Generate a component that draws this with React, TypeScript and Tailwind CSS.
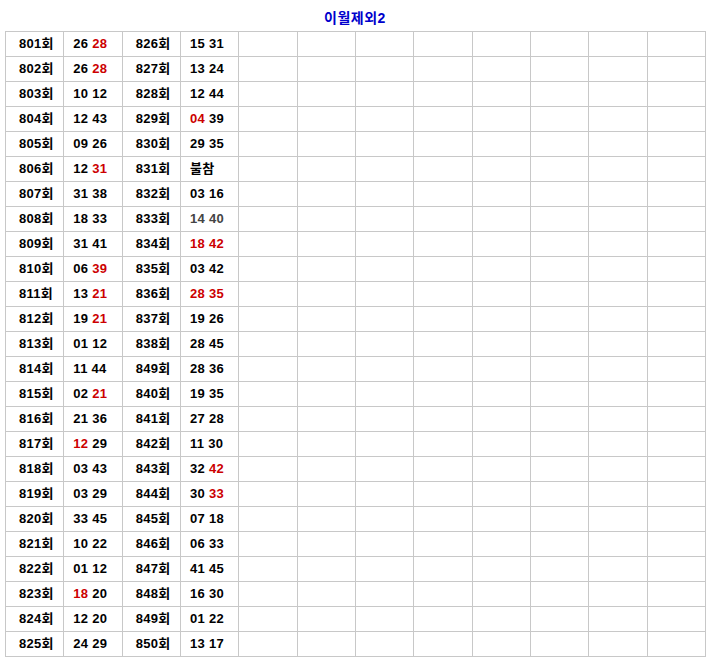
type Num = { v: string; c?: 'r' | 'g' }
type Row = { a: string; an: Num[]; b: string; bn: Num[] | string }

const n = (s: string, c?: 'r' | 'g'): Num => ({ v: s, c })

// 이월제외 목록 (왼쪽 801~825, 오른쪽 826~850)
const rows: Row[] = [
  { a: '801회', an: [n('26'), n('28', 'r')], b: '826회', bn: [n('15'), n('31')] },
  { a: '802회', an: [n('26'), n('28', 'r')], b: '827회', bn: [n('13'), n('24')] },
  { a: '803회', an: [n('10'), n('12')], b: '828회', bn: [n('12'), n('44')] },
  { a: '804회', an: [n('12'), n('43')], b: '829회', bn: [n('04', 'r'), n('39')] },
  { a: '805회', an: [n('09'), n('26')], b: '830회', bn: [n('29'), n('35')] },
  { a: '806회', an: [n('12'), n('31', 'r')], b: '831회', bn: '불참' },
  { a: '807회', an: [n('31'), n('38')], b: '832회', bn: [n('03'), n('16')] },
  { a: '808회', an: [n('18'), n('33')], b: '833회', bn: [n('14', 'g'), n('40', 'g')] },
  { a: '809회', an: [n('31'), n('41')], b: '834회', bn: [n('18', 'r'), n('42', 'r')] },
  { a: '810회', an: [n('06'), n('39', 'r')], b: '835회', bn: [n('03'), n('42')] },
  { a: '811회', an: [n('13'), n('21', 'r')], b: '836회', bn: [n('28', 'r'), n('35', 'r')] },
  { a: '812회', an: [n('19'), n('21', 'r')], b: '837회', bn: [n('19'), n('26')] },
  { a: '813회', an: [n('01'), n('12')], b: '838회', bn: [n('28'), n('45')] },
  { a: '814회', an: [n('11'), n('44')], b: '849회', bn: [n('28'), n('36')] },
  { a: '815회', an: [n('02'), n('21', 'r')], b: '840회', bn: [n('19'), n('35')] },
  { a: '816회', an: [n('21'), n('36')], b: '841회', bn: [n('27'), n('28')] },
  { a: '817회', an: [n('12', 'r'), n('29')], b: '842회', bn: [n('11'), n('30')] },
  { a: '818회', an: [n('03'), n('43')], b: '843회', bn: [n('32'), n('42', 'r')] },
  { a: '819회', an: [n('03'), n('29')], b: '844회', bn: [n('30'), n('33', 'r')] },
  { a: '820회', an: [n('33'), n('45')], b: '845회', bn: [n('07'), n('18')] },
  { a: '821회', an: [n('10'), n('22')], b: '846회', bn: [n('06'), n('33')] },
  { a: '822회', an: [n('01'), n('12')], b: '847회', bn: [n('41'), n('45')] },
  { a: '823회', an: [n('18', 'r'), n('20')], b: '848회', bn: [n('16'), n('30')] },
  { a: '824회', an: [n('12'), n('20')], b: '849회', bn: [n('01'), n('22')] },
  { a: '825회', an: [n('24'), n('29')], b: '850회', bn: [n('13'), n('17')] },
]

const color = (c?: 'r' | 'g') =>
  c === 'r' ? 'text-[#cc0000]' : c === 'g' ? 'text-[#444444]' : 'text-black'

function Nums({ list }: { list: Num[] | string }) {
  if (typeof list === 'string') return <span>{list}</span>
  return (
    <>
      {list.map((x, i) => (
        <span key={i} className={color(x.c)}>
          {i > 0 ? ' ' : ''}
          {x.v}
        </span>
      ))}
    </>
  )
}

const td = 'border border-[#c8c8c8] h-[25px] p-0 align-middle whitespace-pre tracking-[0.3px]'

export default function App() {
  return (
    <div
      className="w-[728px] h-[672px] bg-white text-[13px] font-bold text-black"
      style={{ fontFamily: '"Liberation Sans", "Noto Sans CJK KR", sans-serif' }}
    >
      <div className="w-[710px] pt-[10px]">
        <div className="h-[21px] text-center text-[14px] text-[#0000cc] leading-[17px] tracking-[0.5px]">
          이월제외2
        </div>
        <table className="ml-[5px] w-[701px] table-fixed border-collapse">
          <tbody>
            {rows.map((r) => (
              <tr key={r.a}>
                <td className={`${td} pl-[13px]`}>{r.a}</td>
                <td className={`${td} pl-[9px]`}>
                  <Nums list={r.an} />
                </td>
                <td className={`${td} pl-[13px]`}>{r.b}</td>
                <td className={`${td} pl-[9px]`}>
                  <Nums list={r.bn} />
                </td>
                {Array.from({ length: 8 }).map((_, i) => (
                  <td key={i} className={td} />
                ))}
              </tr>
            ))}
          </tbody>
        </table>
      </div>
    </div>
  )
}
